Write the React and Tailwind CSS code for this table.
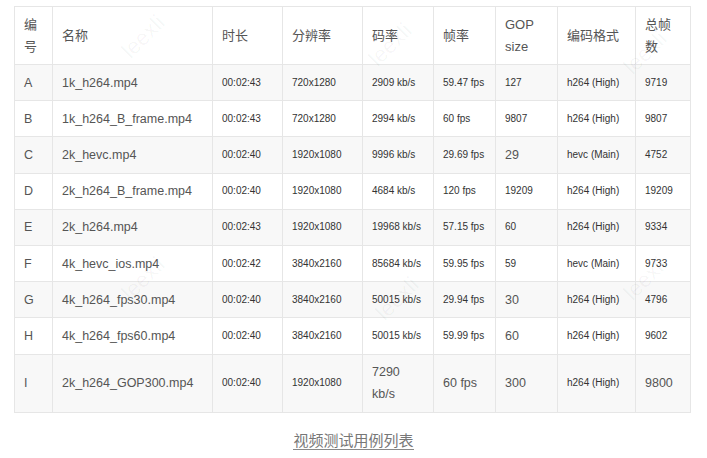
import React from 'react'

const cols = [38, 160, 70, 80, 71, 62, 62, 78, 55]
const headers = ['编号', '名称', '时长', '分辨率', '码率', '帧率', 'GOP size', '编码格式', '总帧数']

// [value, big?]
const rows = [
  ['A', '1k_h264.mp4', '00:02:43', '720x1280', ['2909 kb/s'], ['59.47 fps'], ['127'], 'h264 (High)', ['9719']],
  ['B', '1k_h264_B_frame.mp4', '00:02:43', '720x1280', ['2994 kb/s'], ['60 fps'], ['9807'], 'h264 (High)', ['9807']],
  ['C', '2k_hevc.mp4', '00:02:40', '1920x1080', ['9996 kb/s'], ['29.69 fps'], ['29', true], 'hevc (Main)', ['4752']],
  ['D', '2k_h264_B_frame.mp4', '00:02:40', '1920x1080', ['4684 kb/s'], ['120 fps'], ['19209'], 'h264 (High)', ['19209']],
  ['E', '2k_h264.mp4', '00:02:43', '1920x1080', ['19968 kb/s'], ['57.15 fps'], ['60'], 'h264 (High)', ['9334']],
  ['F', '4k_hevc_ios.mp4', '00:02:42', '3840x2160', ['85684 kb/s'], ['59.95 fps'], ['59'], 'hevc (Main)', ['9733']],
  ['G', '4k_h264_fps30.mp4', '00:02:40', '3840x2160', ['50015 kb/s'], ['29.94 fps'], ['30', true], 'h264 (High)', ['4796']],
  ['H', '4k_h264_fps60.mp4', '00:02:40', '3840x2160', ['50015 kb/s'], ['59.99 fps'], ['60', true], 'h264 (High)', ['9602']],
  ['I', '2k_h264_GOP300.mp4', '00:02:40', '1920x1080', ['7290 kb/s', true], ['60 fps', true], ['300', true], 'h264 (High)', ['9800', true]],
]

const marks = [
  [118, 20], [365, 28], [620, 36],
  [118, 262], [372, 282], [620, 262],
]

const Cell = ({ children, big }) => (
  <td
    className={
      'border border-[#e6e6e6] px-[9px] py-[6.6px] align-middle leading-[22px] ' +
      (big ? 'text-[12.5px] text-[#555]' : 'text-[10px] text-[#333]')
    }
  >
    {children}
  </td>
)

export default function App() {
  return (
    <div className="relative w-[707px] h-[458px] bg-white font-['Liberation_Sans','Noto_Sans_CJK_SC',sans-serif] overflow-hidden">
      <div className="pl-[14px] pt-[6px]">
        <table className="table-fixed border-collapse w-[676px]">
          <colgroup>
            {cols.map((w, i) => (
              <col key={i} style={{ width: w }} />
            ))}
          </colgroup>
          <thead>
            <tr className="bg-white">
              {headers.map((h) => (
                <th
                  key={h}
                  className="border border-[#e6e6e6] px-[9px] py-[6.5px] text-left align-middle font-normal text-[13px] leading-[22px] text-[#555]"
                >
                  {h}
                </th>
              ))}
            </tr>
          </thead>
          <tbody>
            {rows.map((r, i) => (
              <tr key={r[0]} className={i % 2 === 0 ? 'bg-[#f8f8f8]' : 'bg-white'}>
                <Cell big>{r[0]}</Cell>
                <Cell big>{r[1]}</Cell>
                <Cell>{r[2]}</Cell>
                <Cell>{r[3]}</Cell>
                <Cell big={r[4][1]}>{r[4][0]}</Cell>
                <Cell big={r[5][1]}>{r[5][0]}</Cell>
                <Cell big={r[6][1]}>{r[6][0]}</Cell>
                <Cell>{r[7]}</Cell>
                <Cell big={r[8][1]}>{r[8][0]}</Cell>
              </tr>
            ))}
          </tbody>
        </table>
        <div className="flex justify-center pr-[14px] pt-[19px]">
          <span className="text-[15px] leading-[17px] text-[#777] border-b border-[#888]">
            视频测试用例列表
          </span>
        </div>
      </div>
      {marks.map(([x, y], i) => (
        <div
          key={i}
          className="absolute pointer-events-none -rotate-45 text-[22px] text-black/[0.04] select-none"
          style={{ left: x, top: y }}
        >
          leexli
        </div>
      ))}
    </div>
  )
}
